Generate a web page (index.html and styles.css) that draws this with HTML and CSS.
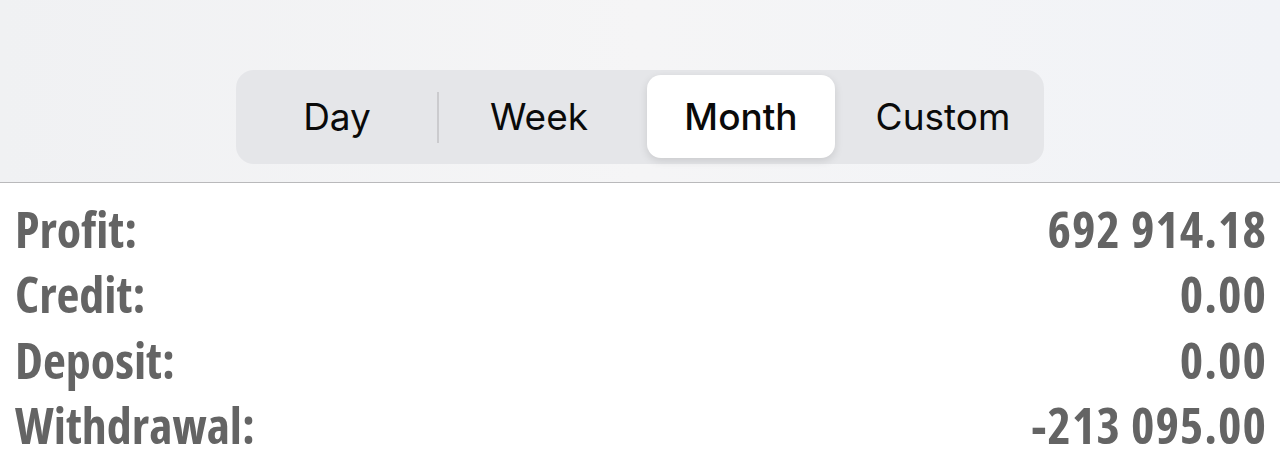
FILE: index.html
```html
<!DOCTYPE html>
<html lang="en">
<head>
    <meta charset="UTF-8">
    <meta name="viewport" content="width=device-width, initial-scale=1.0">
    <title>Report</title>
    <link rel="stylesheet" href="styles.css">
</head>
<body>

    <div class="header">
        <div class="segmented">
            <div class="segment">Day</div>
            <div class="segment divided">Week</div>
            <div class="segment selected">Month</div>
            <div class="segment">Custom</div>
        </div>
    </div>

    <div class="summary">
        <div class="row"><span>Profit:</span><span class="value">692 914.18</span></div>
        <div class="row"><span>Credit:</span><span class="value">0.00</span></div>
        <div class="row"><span>Deposit:</span><span class="value">0.00</span></div>
        <div class="row"><span>Withdrawal:</span><span class="value">-213 095.00</span></div>
    </div>

</body>
</html>
```

FILE: styles.css
```css
body {
    margin: 0;
    background-color: #ffffff;
    font-family: Inter, 'Liberation Sans', sans-serif;
}
.header {
    height: 183px;
    background: linear-gradient(90deg, #f0f1f3 0%, #f5f5f6 50%, #f1f3f7 100%);
    border-bottom: 1px solid #b9b9bb;
    display: flex;
    justify-content: center;
    padding-top: 70px;
    box-sizing: border-box;
}
.segmented {
    width: 808px;
    height: 94px;
    padding: 5px 0 6px;
    box-sizing: border-box;
    background-color: #e5e6e9;
    border-radius: 18px;
    display: grid;
    grid-template-columns: repeat(4, 1fr);
}
.segment {
    display: flex;
    align-items: center;
    justify-content: center;
    font-size: 37px;
    color: #0a0a0a;
    position: relative;
}
.divided::before {
    content: '';
    position: absolute;
    left: -1px;
    top: 17px;
    width: 2px;
    height: 51px;
    background-color: #cbcbce;
}
.selected {
    margin: 0 7px;
    background-color: #ffffff;
    border-radius: 14px;
    font-weight: 500;
    box-shadow: 0 3px 8px rgba(0,0,0,0.12);
}
.summary {
    padding: 14px 14px 0 15px;
}
.row {
    display: flex;
    justify-content: space-between;
    font-family: 'Open Sans', sans-serif;
    font-stretch: 75%;
    font-weight: bold;
    font-size: 50px;
    line-height: 65.3px;
    color: #646464;
}
.value {
    letter-spacing: 1px;
    margin-right: -1px;
}
```
